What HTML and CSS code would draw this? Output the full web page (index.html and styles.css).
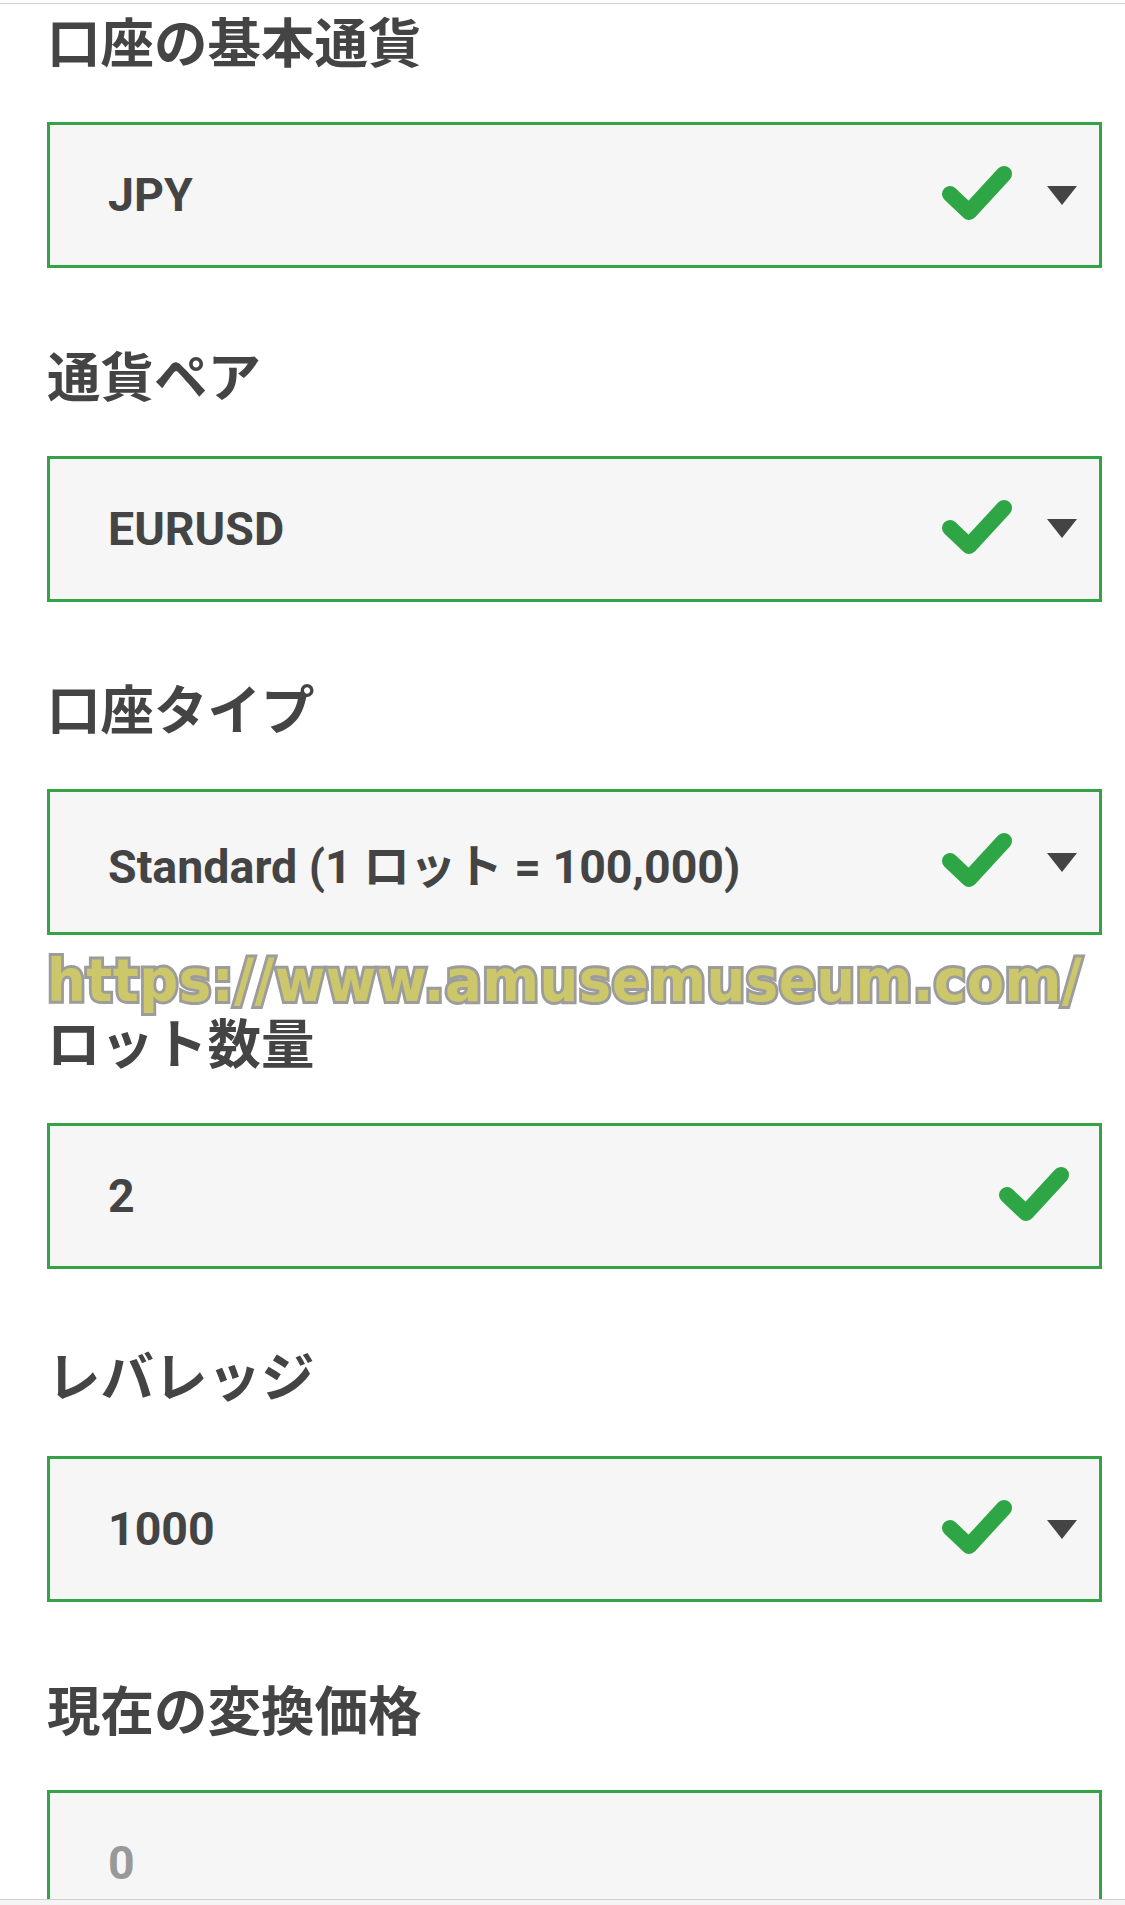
FILE: index.html
```html
<html lang="ja">
<head>
  <meta charset="UTF-8">
  <title>証拠金計算</title>
  <link rel="stylesheet" href="styles.css">
</head>
<body>
  <div class="page">
    <div class="topbar"></div>
    <div class="form">
      <div class="field">
        <div class="label">口座の基本通貨</div>
        <div class="box">
          <span class="value">JPY</span>
          <svg class="check" viewBox="0 0 73 57"><polyline points="9,29 28,47 63,9"/></svg>
          <span class="caret"></span>
        </div>
      </div>
      <div class="field">
        <div class="label">通貨ペア</div>
        <div class="box">
          <span class="value">EURUSD</span>
          <svg class="check" viewBox="0 0 73 57"><polyline points="9,29 28,47 63,9"/></svg>
          <span class="caret"></span>
        </div>
      </div>
      <div class="field">
        <div class="label">口座タイプ</div>
        <div class="box">
          <span class="value">Standard (1 ロット = 100,000)</span>
          <svg class="check" viewBox="0 0 73 57"><polyline points="9,29 28,47 63,9"/></svg>
          <span class="caret"></span>
        </div>
      </div>
      <div class="field">
        <div class="label">ロット数量</div>
        <div class="box box-input">
          <span class="value">2</span>
          <svg class="check" viewBox="0 0 73 57"><polyline points="9,29 28,47 63,9"/></svg>
        </div>
      </div>
      <div class="field">
        <div class="label">レバレッジ</div>
        <div class="box">
          <span class="value">1000</span>
          <svg class="check" viewBox="0 0 73 57"><polyline points="9,29 28,47 63,9"/></svg>
          <span class="caret"></span>
        </div>
      </div>
      <div class="field">
        <div class="label">現在の変換価格</div>
        <div class="box box-input">
          <span class="value placeholder">0</span>
        </div>
      </div>
    </div>
    <div class="watermark">https://www.amusemuseum.com/</div>
    <div class="bottombar"></div>
  </div>
</body>
</html>
```

FILE: styles.css
```css
html, body {
  margin: 0;
  height: 1905px;
  overflow: hidden;
  background: #fff;
}

body {
  font-family: Roboto, "Noto Sans CJK JP", sans-serif;
  color: #444;
}

.page {
  position: relative;
  height: 1905px;
}

.topbar {
  height: 3px;
  border-bottom: 1px solid #cfcfcf;
}

.form {
  padding: 0 23px 0 47px;
}

.field {
  margin-bottom: 69.5px;
}

.label {
  font-family: "Noto Sans CJK JP", sans-serif;
  font-weight: 700;
  font-size: 53.5px;
  line-height: 72px;
  color: #444;
  margin-bottom: 46px;
}

.box {
  display: flex;
  align-items: center;
  height: 140px;
  border: 3px solid #34a348;
  background: #f6f6f6;
  padding: 0 22px 0 58px;
}

.value {
  flex: 1;
  font-size: 46.5px;
  font-weight: 700;
  color: #444;
  white-space: nowrap;
}

.value.placeholder {
  color: #999;
}

.check {
  width: 73px;
  height: 57px;
  margin-top: -3px;
}

.check polyline {
  fill: none;
  stroke: #2ea646;
  stroke-width: 16;
  stroke-linecap: round;
  stroke-linejoin: round;
}

.caret {
  width: 0;
  height: 0;
  margin-left: 33px;
  border-left: 15px solid transparent;
  border-right: 15px solid transparent;
  border-top: 19px solid #444;
}

.box-input {
  padding-right: 28px;
}

.watermark {
  position: absolute;
  left: 47px;
  top: 952px;
  font-family: "DejaVu Sans", sans-serif;
  font-weight: 700;
  font-size: 58px;
  line-height: 58px;
  letter-spacing: 0.5px;
  color: #cbc76a;
  -webkit-text-stroke: 6px #9c9c9c;
  paint-order: stroke fill;
  transform: scaleX(0.94);
  transform-origin: left top;
  white-space: nowrap;
}

.bottombar {
  position: absolute;
  left: 0;
  right: 0;
  bottom: 0;
  height: 5px;
  border-top: 1px solid #cfcfcf;
  background: #f4f4f4;
}
```
